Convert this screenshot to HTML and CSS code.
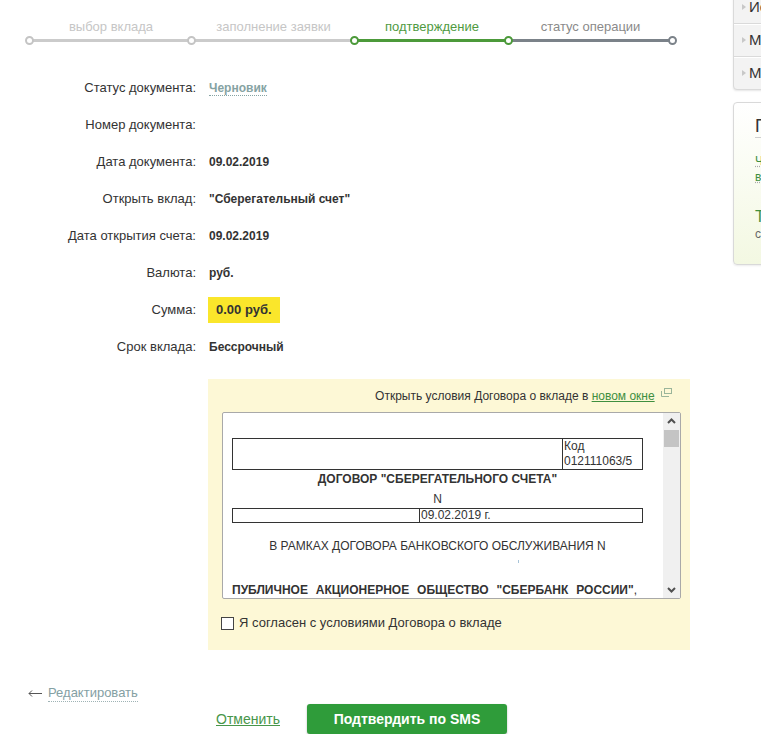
FILE: index.html
```html
<!DOCTYPE html>
<html lang="ru">
<head>
    <meta charset="UTF-8">
    <meta name="viewport" content="width=device-width, initial-scale=1.0">
    <title>Открытие вклада</title>
    <link rel="stylesheet" href="styles.css">
</head>
<body>
    <div class="page">
        <div class="content">
            <div class="steps">
                <div class="step step-done">выбор вклада</div>
                <div class="step step-done">заполнение заявки</div>
                <div class="step step-current">подтверждение</div>
                <div class="step step-next">статус операции</div>
            </div>

            <div class="details">
                <div class="row">
                    <span class="label">Статус документа:</span>
                    <span class="value"><span class="status">Черновик</span></span>
                </div>
                <div class="row">
                    <span class="label">Номер документа:</span>
                    <span class="value"></span>
                </div>
                <div class="row">
                    <span class="label">Дата документа:</span>
                    <span class="value">09.02.2019</span>
                </div>
                <div class="row">
                    <span class="label">Открыть вклад:</span>
                    <span class="value">"Сберегательный счет"</span>
                </div>
                <div class="row">
                    <span class="label">Дата открытия счета:</span>
                    <span class="value">09.02.2019</span>
                </div>
                <div class="row">
                    <span class="label">Валюта:</span>
                    <span class="value">руб.</span>
                </div>
                <div class="row">
                    <span class="label">Сумма:</span>
                    <span class="value"><span class="amount">0.00 руб.</span></span>
                </div>
                <div class="row">
                    <span class="label">Срок вклада:</span>
                    <span class="value">Бессрочный</span>
                </div>
            </div>

            <div class="terms">
                <div class="terms-link">
                    Открыть условия Договора о вкладе в <a href="#">новом окне</a>
                    <svg class="new-window" width="11" height="9" viewBox="0 0 11 9">
                        <rect x="3.5" y="0.5" width="7" height="5" fill="none" stroke="#9ab59a"/>
                        <path d="M0.5 3v5.5h7.5" fill="none" stroke="#9ab59a"/>
                    </svg>
                </div>
                <div class="doc">
                    <div class="doc-body">
                        <table class="doc-table">
                            <tr>
                                <td class="cell-wide"></td>
                                <td>Код<br>012111063/5</td>
                            </tr>
                        </table>
                        <p class="doc-title">ДОГОВОР "СБЕРЕГАТЕЛЬНОГО СЧЕТА"</p>
                        <p class="doc-number">N</p>
                        <table class="doc-table doc-date">
                            <tr>
                                <td class="cell-half"></td>
                                <td>09.02.2019 г.</td>
                            </tr>
                        </table>
                        <p class="doc-frame">В РАМКАХ ДОГОВОРА БАНКОВСКОГО ОБСЛУЖИВАНИЯ N</p>
                        <p class="doc-mark"><span></span></p>
                        <p class="doc-text"><b>ПУБЛИЧНОЕ АКЦИОНЕРНОЕ ОБЩЕСТВО "СБЕРБАНК РОССИИ"</b>,</p>
                    </div>
                    <div class="scrollbar">
                        <svg class="scroll-arrow" width="17" height="17" viewBox="0 0 17 17">
                            <polyline points="5,10 8.5,6.5 12,10" fill="none" stroke="#505050" stroke-width="2"/>
                        </svg>
                        <div class="scroll-thumb"></div>
                        <div class="scroll-track"></div>
                        <svg class="scroll-arrow" width="17" height="17" viewBox="0 0 17 17">
                            <polyline points="5,7 8.5,10.5 12,7" fill="none" stroke="#505050" stroke-width="2"/>
                        </svg>
                    </div>
                </div>
                <label class="agree">
                    <input type="checkbox">
                    Я согласен с условиями Договора о вкладе
                </label>
            </div>

            <div class="back">
                <svg width="14" height="7" viewBox="0 0 14 7">
                    <path d="M1 3.5h13M1 3.5l3-3M1 3.5l3 3" fill="none" stroke="#555" stroke-width="1"/>
                </svg>
                <a href="#">Редактировать</a>
            </div>

            <div class="actions">
                <a class="cancel" href="#">Отменить</a>
                <button class="confirm">Подтвердить по SMS</button>
            </div>
        </div>

        <aside class="sidebar">
            <ul class="menu">
                <li>История операций</li>
                <li>Мои финансы</li>
                <li>Мои шаблоны</li>
            </ul>
            <div class="info">
                <div class="info-title">Полезная информация</div>
                <a class="info-link" href="#">Часто задаваемые<br>вопросы</a>
                <a class="info-big" href="#">Тарифы</a>
                <div class="info-note">справочная информация</div>
            </div>
        </aside>
    </div>
</body>
</html>
```

FILE: styles.css
```css
body {
    margin: 0;
    font-family: "Liberation Sans", Arial, sans-serif;
    color: #333;
    background-color: #fff;
    overflow: hidden;
}

.page {
    display: flex;
    align-items: flex-start;
    width: 1000px;
}

.content {
    width: 720px;
    flex-shrink: 0;
}

/* steps */

.steps {
    display: grid;
    grid-template-columns: 162px 163px 154px 163px;
    margin-left: 30px;
    padding-top: 19px;
}

.step {
    position: relative;
    text-align: center;
    font-size: 13px;
    line-height: 16px;
    padding-bottom: 4px;
    border-bottom: 3px solid #cbcbcb;
    color: #c6c6c6;
}

.step::before,
.step-next::after {
    content: "";
    position: absolute;
    bottom: -6px;
    left: -5px;
    width: 5px;
    height: 5px;
    border: 2px solid #c4c4c4;
    border-radius: 50%;
    background-color: #fff;
    z-index: 1;
}

.step-current {
    color: #4f9a3f;
    border-bottom-color: #4c9a3a;
}

.step-current::before {
    border-color: #4c9a3a;
}

.step-next {
    color: #8a8a8a;
    border-bottom-color: #7b8289;
}

.step-next::before {
    border-color: #4c9a3a;
}

.step-next::after {
    left: auto;
    right: -5px;
    border-color: #7b8289;
}

/* details */

.details {
    margin-top: 27px;
}

.row {
    display: flex;
    align-items: center;
    height: 37px;
}

.label {
    width: 196px;
    text-align: right;
    font-size: 13px;
}

.value {
    margin-left: 13px;
    font-size: 12px;
    font-weight: bold;
}

.status {
    color: #86a3a3;
    border-bottom: 1px dotted #86a3a3;
}

.amount {
    display: inline-block;
    margin-left: -1px;
    background-color: #fae62b;
    padding: 0 8px;
    line-height: 26px;
    font-size: 13px;
}

/* terms */

.terms {
    margin: 14px 0 0 208px;
    width: 482px;
    height: 271px;
    box-sizing: border-box;
    padding: 9px 9px 0 14px;
    background-color: #fdf8d6;
}

.terms-link {
    text-align: right;
    font-size: 12px;
    line-height: 16px;
    padding-right: 9px;
}

.terms-link a {
    color: #3f8f3f;
}

.new-window {
    margin-left: 3px;
    vertical-align: 3px;
}

.doc {
    display: flex;
    height: 187px;
    margin-top: 8px;
    box-sizing: border-box;
    border: 1px solid #a9a9a9;
    border-radius: 2px;
    background-color: #fff;
}

.doc-body {
    flex: 1;
    overflow: hidden;
    padding: 25px 20px 0 9px;
    font-size: 12px;
    line-height: 16px;
}

.doc-table {
    width: 100%;
    border-collapse: collapse;
    border: 1px solid #333;
}

.doc-table td {
    padding: 0 1px;
    line-height: 15px;
    vertical-align: top;
}

.doc-table .cell-wide {
    width: 327px;
    border-right: 1px solid #333;
}

.doc-table .cell-half {
    width: 184px;
    border-right: 1px solid #333;
}

.doc-date td {
    line-height: 13px;
}

.doc-body p {
    margin: 0;
    text-align: center;
}

.doc-title {
    font-weight: bold;
    padding-top: 1px;
}

.doc-body .doc-number {
    margin-top: 4px;
}

.doc-date {
    margin-top: 1px;
}

.doc-body .doc-frame {
    margin-top: 15px;
}

.doc-body .doc-mark {
    height: 12px;
    padding: 6px 0 0 286px;
    text-align: left;
}

.doc-mark span {
    display: block;
    width: 1px;
    height: 3px;
    background-color: #a8c4d8;
}

.doc-body .doc-text {
    margin-top: 10px;
    padding-right: 6px;
    text-align: justify;
    text-align-last: justify;
}

.scrollbar {
    width: 17px;
    display: flex;
    flex-direction: column;
    background-color: #f0f0f0;
}

.scroll-thumb {
    height: 17px;
    margin: 0 1px;
    background-color: #c4c4c4;
}

.scroll-track {
    flex: 1;
}

.agree {
    display: flex;
    align-items: center;
    margin-top: 16px;
    font-size: 13px;
    line-height: 16px;
}

.agree input {
    appearance: none;
    width: 13px;
    height: 13px;
    margin: 0 5px 0 -1px;
    border: 1px solid #444;
    background-color: #fff;
}

/* bottom */

.back {
    display: flex;
    align-items: center;
    margin: 35px 0 0 28px;
    font-size: 13px;
    line-height: 16px;
}

.back a {
    margin-left: 6px;
    color: #84a0a3;
    text-decoration: none;
    border-bottom: 1px dotted #9fb3b5;
}

.actions {
    display: flex;
    align-items: center;
    margin-top: 2px;
    padding-left: 216px;
}

.cancel {
    font-size: 14px;
    color: #48964a;
}

.confirm {
    margin-left: 27px;
    width: 200px;
    height: 30px;
    border: none;
    border-radius: 3px;
    background-color: #2f9c3a;
    box-shadow: 0 1px 2px rgba(0,0,0,0.3);
    color: white;
    font-family: inherit;
    font-size: 14px;
    font-weight: bold;
    cursor: pointer;
}

/* sidebar */

.sidebar {
    width: 240px;
    margin-left: 13px;
    flex-shrink: 0;
}

.menu {
    list-style: none;
    margin: -10px 0 0;
    padding: 0;
    background-color: #f3f3f3;
    border: 1px solid #dadada;
    border-radius: 0 0 4px 4px;
    box-shadow: 0 1px 2px rgba(0,0,0,0.1);
}

.menu li {
    height: 32px;
    line-height: 32px;
    padding-left: 15px;
    font-size: 15px;
    position: relative;
    border-bottom: 1px solid #dadada;
    box-shadow: inset 0 1px 0 #fff;
}

.menu li:last-child {
    border-bottom: none;
}

.menu li::before {
    content: "";
    position: absolute;
    left: 8px;
    top: 13px;
    border-left: 4px solid #c8c8c8;
    border-top: 3px solid transparent;
    border-bottom: 3px solid transparent;
}

.info {
    margin-top: 12px;
    height: 163px;
    box-sizing: border-box;
    padding: 12px 0 0 21px;
    border: 1px solid #d9d9d9;
    border-radius: 4px;
    background: linear-gradient(#fff, #f3f8e2);
    box-shadow: 0 1px 2px rgba(0,0,0,0.08);
}

.info-title {
    font-size: 18px;
    line-height: 22px;
    border-bottom: 1px solid #cfcfcf;
}

.info-link {
    display: block;
    margin-top: 15px;
    font-size: 12px;
    line-height: 16px;
    color: #3f8f3f;
    text-decoration: underline dotted #aaa;
}

.info-big {
    display: block;
    margin-top: 23px;
    font-size: 16px;
    line-height: 18px;
    color: #3f8f3f;
    text-decoration: none;
}

.info-note {
    font-size: 12px;
    line-height: 16px;
    color: #666;
}
```
